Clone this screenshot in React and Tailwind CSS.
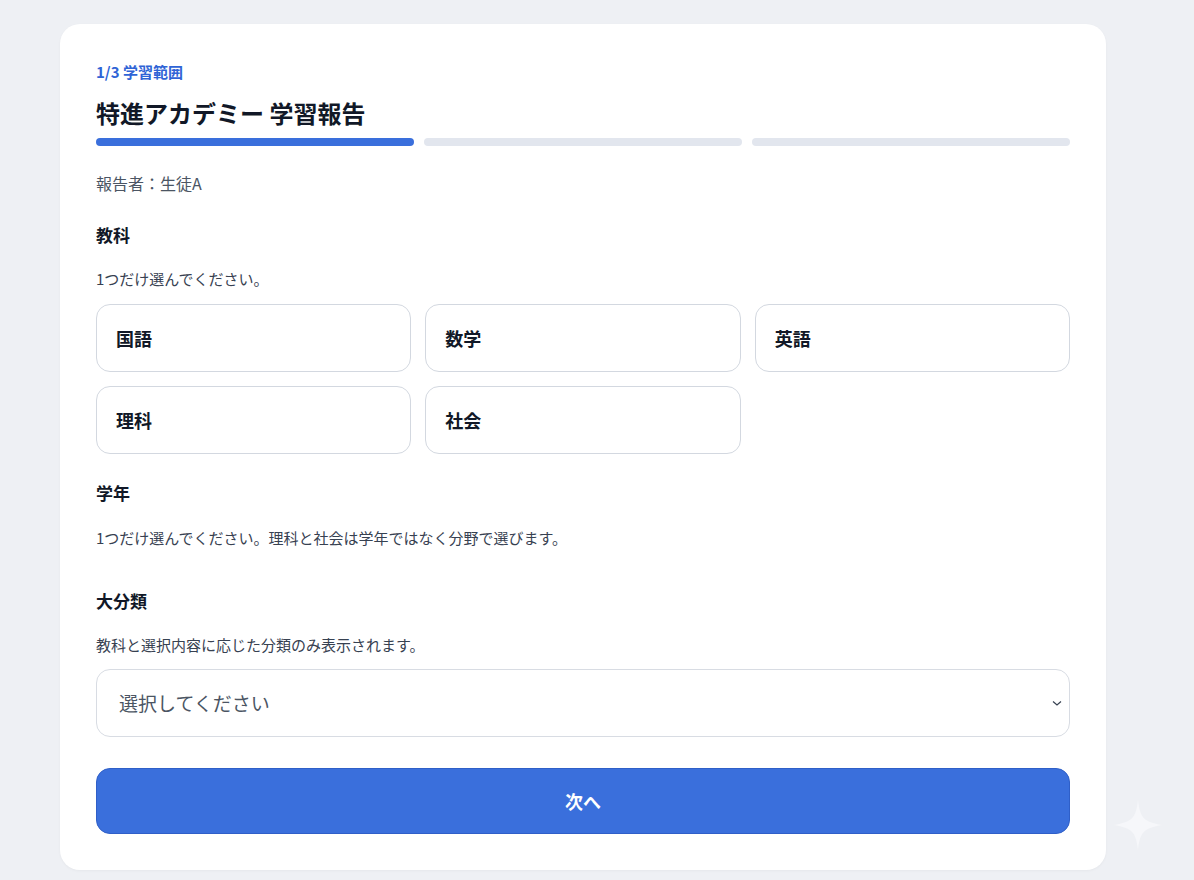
import React, { useState } from 'react';

const subjects = ['国語', '数学', '英語', '理科', '社会'];

const App = () => {
  const [subject, setSubject] = useState(null);

  return (
    <div
      className="relative min-h-[880px] bg-[#eef0f4] pt-6 pl-[60px] pr-[88px] text-[#111827]"
      style={{ fontFamily: '"Noto Sans CJK JP", "Noto Sans", sans-serif' }}
    >
      <div className="bg-white rounded-[20px] px-9 pt-[34px] pb-9 shadow-[0_1px_3px_rgba(0,0,0,0.04)]">
        <div className="text-[15px] font-bold text-[#2f64d6] leading-[28px]">1/3 学習範囲</div>
        <h1 className="mt-[10px] text-[24px] font-bold leading-[34px]">特進アカデミー 学習報告</h1>
        <div className="mt-[8px] grid grid-cols-3 gap-[10px]">
          <div className="h-2 rounded-full bg-[#3a6fdc]" />
          <div className="h-2 rounded-full bg-[#e2e6ee]" />
          <div className="h-2 rounded-full bg-[#e2e6ee]" />
        </div>
        <div className="mt-[25px] text-[16px] text-[#4b5563] leading-[24px]">報告者：生徒A</div>

        <div className="mt-[27px] text-[17px] font-bold leading-[26px]">教科</div>
        <div className="mt-[19px] text-[15px] text-[#374151] leading-[24px]">1つだけ選んでください。</div>
        <div className="mt-[13px] grid grid-cols-3 gap-x-[14px] gap-y-[14px]">
          {subjects.map((s) => (
            <button
              key={s}
              onClick={() => setSubject(s)}
              className={`h-[68px] rounded-[14px] border text-left px-[19px] text-[18px] font-bold ${
                subject === s ? 'border-[#3a6fdc] bg-[#eef3fd]' : 'border-[#d3d8e0] bg-white'
              }`}
            >
              {s}
            </button>
          ))}
        </div>

        <div className="mt-[26px] text-[17px] font-bold leading-[26px]">学年</div>
        <div className="mt-[20px] text-[15px] text-[#374151] leading-[24px]">
          1つだけ選んでください。理科と社会は学年ではなく分野で選びます。
        </div>

        <div className="mt-[38px] text-[17px] font-bold leading-[26px]">大分類</div>
        <div className="mt-[19px] text-[15px] text-[#374151] leading-[24px]">教科と選択内容に応じた分類のみ表示されます。</div>
        <div className="mt-[12px] h-[68px] rounded-[14px] border border-[#d8dce3] flex items-center justify-between pl-[22px] pr-[6px]">
          <span className="text-[19px] text-[#4b5563]">選択してください</span>
          <svg width="12" height="12" viewBox="0 0 12 12" fill="none" stroke="#374151" strokeWidth="1.2">
            <path d="M2 4.5 6 8l4-3.5" />
          </svg>
        </div>
        <button className="mt-[31px] w-full h-[66px] rounded-[14px] bg-[#3a6fdc] border border-[#2f5fc8] text-white text-[18px] font-bold">
          次へ
        </button>
      </div>
      <svg className="absolute left-[1114px] top-[800px]" width="48" height="50" viewBox="0 0 48 50">
        <path d="M24 0 C26 18 30 22 48 25 C30 28 26 32 24 50 C22 32 18 28 0 25 C18 22 22 18 24 0Z" fill="#f6f7fa" />
      </svg>
    </div>
  );
};

export default App;
